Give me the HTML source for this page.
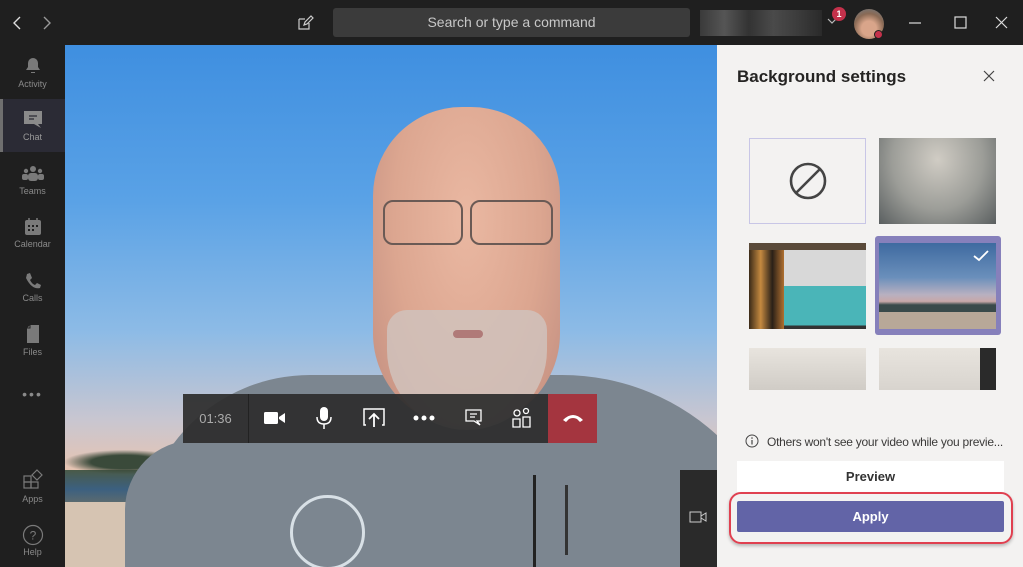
<!DOCTYPE html>
<html><head><meta charset="utf-8"><style>
*{margin:0;padding:0;box-sizing:border-box}
html,body{width:1023px;height:567px;overflow:hidden}
body{position:relative;background:#1f1f1f;font-family:"Liberation Sans",sans-serif}
.a{position:absolute}
.nav{color:#8a8a8a;font-size:9px;text-align:center;width:65px;left:0}
</style></head><body>
<div class="a" style="left:0;top:0;width:1023px;height:45px;background:#1f1f1f"></div>
<svg class="a" style="left:10px;top:14px" width="50" height="18"><path d="M10 3 L4 9 L10 15" stroke="#ddd" fill="none" stroke-width="1.4"/><path d="M34 3 L40 9 L34 15" stroke="#999" fill="none" stroke-width="1.4"/></svg>
<svg class="a" style="left:297px;top:15px" width="18" height="16"><path d="M2 4 H8 M2 4 V14 H12 V8 M7 10 L8 7 L14 1 L16 3 L10 9 Z" stroke="#ccc" fill="none" stroke-width="1.2"/></svg>
<div class="a" style="left:333px;top:8px;width:357px;height:29px;background:#3b3b3b;border-radius:3px;color:#c8c8c8;font-size:14px;text-align:center;line-height:29px">Search or type a command</div>
<div class="a" style="left:700px;top:10px;width:122px;height:26px;background:linear-gradient(90deg,#3a3a3a,#555 20%,#333 40%,#4a4a4a 60%,#3c3c3c 80%,#2a2a2a)"></div>
<svg class="a" style="left:826px;top:16px" width="12" height="10"><path d="M2 3 L6 7 L10 3" stroke="#bbb" fill="none" stroke-width="1.2"/></svg>
<div class="a" style="left:832px;top:7px;width:14px;height:14px;border-radius:7px;background:#c4314b;color:#fff;font-size:9px;font-weight:bold;text-align:center;line-height:14px">1</div>
<div class="a" style="left:854px;top:9px;width:30px;height:30px;border-radius:15px;background:radial-gradient(circle at 50% 65%,#d9a58a 30%,#8a6a55 60%,#6b7a85)"></div>
<div class="a" style="left:874px;top:30px;width:9px;height:9px;border-radius:5px;background:#c4314b;border:1px solid #1f1f1f"></div>
<svg class="a" style="left:905px;top:14px" width="110" height="18"><path d="M4 9 H16" stroke="#ddd" stroke-width="1.2"/><rect x="50" y="3" width="11" height="11" stroke="#ddd" fill="none" stroke-width="1.2"/><path d="M91 3 L102 14 M102 3 L91 14" stroke="#ddd" stroke-width="1.2"/></svg>
<div class="a" style="left:0;top:99px;width:65px;height:53px;background:#2b2b35"></div>
<div class="a" style="left:0;top:99px;width:3px;height:53px;background:#6f6f6f"></div>
<svg class="a" style="left:22px;top:55px" width="22" height="22"><path d="M4 15 H18 L16 12 V8 A5 5 0 0 0 6 8 V12 Z M9 17 H13 V18 H9Z" fill="#7a7a7a"/></svg>
<div class="a nav" style="top:79px">Activity</div>
<svg class="a" style="left:22px;top:110px" width="22" height="20"><path d="M2 1 H20 V14 H16 L19 18 L12 14 H2Z" fill="#8a8a8a"/><path d="M7 6 H15 M7 9 H12" stroke="#2b2b35" stroke-width="1.2"/></svg>
<div class="a nav" style="top:132px;color:#9a9a9a">Chat</div>
<svg class="a" style="left:21px;top:165px" width="24" height="18"><circle cx="12" cy="4" r="3" fill="#7a7a7a"/><circle cx="5" cy="6" r="2.2" fill="#7a7a7a"/><circle cx="19" cy="6" r="2.2" fill="#7a7a7a"/><rect x="7" y="8" width="10" height="8" rx="3" fill="#7a7a7a"/><rect x="1" y="9" width="6" height="6" rx="2" fill="#7a7a7a"/><rect x="17" y="9" width="6" height="6" rx="2" fill="#7a7a7a"/></svg>
<div class="a nav" style="top:186px">Teams</div>
<svg class="a" style="left:24px;top:218px" width="18" height="18"><rect x="1" y="2" width="16" height="15" rx="2" fill="#7a7a7a"/><path d="M5 0V4M13 0V4" stroke="#7a7a7a" stroke-width="1.5"/><g fill="#1f1f1f"><rect x="4" y="7" width="2" height="2"/><rect x="8" y="7" width="2" height="2"/><rect x="12" y="7" width="2" height="2"/><rect x="4" y="11" width="2" height="2"/><rect x="8" y="11" width="2" height="2"/></g></svg>
<div class="a nav" style="top:239px">Calendar</div>
<svg class="a" style="left:24px;top:272px" width="18" height="18"><path d="M3 2 L6 1 L8 6 L6 8 Q8 12 11 13 L13 11 L17 13 L16 16 Q8 18 2 6Z" fill="#7a7a7a"/></svg>
<div class="a nav" style="top:293px">Calls</div>
<svg class="a" style="left:25px;top:324px" width="16" height="20"><path d="M5 1 H14 V19 H2 V4Z" fill="#7a7a7a"/><path d="M2 4 H5 V1" fill="none" stroke="#1f1f1f"/></svg>
<div class="a nav" style="top:347px">Files</div>
<div class="a nav" style="top:386px;font-size:14px;letter-spacing:2px">•••</div>
<svg class="a" style="left:22px;top:468px" width="22" height="22"><rect x="2" y="8" width="7" height="6" stroke="#7a7a7a" fill="none" stroke-width="1.2"/><rect x="9" y="14" width="7" height="6" stroke="#7a7a7a" fill="none" stroke-width="1.2"/><rect x="2" y="14" width="7" height="6" stroke="#7a7a7a" fill="none" stroke-width="1.2"/><path d="M15 2 L20 7 L15 12 L10 7Z" stroke="#7a7a7a" fill="none" stroke-width="1.2"/></svg>
<div class="a nav" style="top:494px">Apps</div>
<svg class="a" style="left:22px;top:524px" width="22" height="22"><circle cx="11" cy="11" r="9.5" stroke="#7a7a7a" fill="none" stroke-width="1.2"/><text x="11" y="15.5" font-size="12" fill="#7a7a7a" text-anchor="middle" font-family="Liberation Sans">?</text></svg>
<div class="a nav" style="top:547px">Help</div>
<!-- video -->
<div class="a" style="left:65px;top:45px;width:652px;height:522px;overflow:hidden;background:linear-gradient(180deg,#3f8fe0 0%,#5aa2e6 30%,#8dbbe6 55%,#c9c6d0 72%,#e8c4b0 82%,#e6c9b0 100%)">
 <div class="a" style="left:0;top:455px;width:130px;height:70px;background:#d6c4b2"></div>
 <div class="a" style="left:0;top:425px;width:120px;height:32px;background:linear-gradient(180deg,#4a5a48,#3c6080 60%,#5a6a70)"></div>
 <div class="a" style="left:0;top:405px;width:120px;height:24px;background:radial-gradient(ellipse,#3a4a3a 40%,transparent 72%)"></div>
 <div class="a" style="left:75px;top:330px;width:652px;height:260px;border-radius:170px 230px 0 0;background:#7c8690"></div>
 <div class="a" style="left:60px;top:395px;width:140px;height:140px;background:#7c8690;border-radius:70px 0 0 0"></div>
 <div class="a" style="left:468px;top:430px;width:3px;height:100px;background:#222"></div>
 <div class="a" style="left:500px;top:440px;width:3px;height:70px;background:#333"></div>
 <div class="a" style="left:225px;top:450px;width:75px;height:75px;border-radius:38px;border:3px solid #d8e0e6"></div>
 <div class="a" style="left:308px;top:62px;width:187px;height:320px;border-radius:95px 95px 100px 100px;background:radial-gradient(ellipse at 50% 35%,#eab8a2 0%,#dca690 55%,#c99585 85%)"></div>
 <div class="a" style="left:322px;top:265px;width:160px;height:120px;border-radius:20px 20px 80px 80px;background:#d0c2bc;opacity:.85"></div>
 <div class="a" style="left:388px;top:285px;width:30px;height:8px;border-radius:4px;background:#b07a78"></div>
 <div class="a" style="left:318px;top:155px;width:80px;height:45px;border:2px solid #6a5a55;border-radius:10px"></div>
 <div class="a" style="left:405px;top:155px;width:83px;height:45px;border:2px solid #6a5a55;border-radius:10px"></div>
 <div class="a" style="left:615px;top:425px;width:40px;height:100px;background:#2a2a2a"></div>
 <svg class="a" style="left:623px;top:463px" width="20" height="20"><rect x="2" y="4" width="11" height="10" stroke="#ccc" fill="none"/><path d="M13 8 L18 5 V13 L13 10" stroke="#ccc" fill="none"/></svg>
</div>
<!-- toolbar -->
<div class="a" style="left:183px;top:394px;width:365px;height:49px;background:rgba(45,45,45,.93)"></div>
<div class="a" style="left:248px;top:394px;width:1px;height:49px;background:#222"></div>
<div class="a" style="left:183px;top:394px;width:65px;height:49px;color:#aaa;font-size:13px;text-align:center;line-height:49px">01:36</div>
<svg class="a" style="left:263px;top:409px" width="24" height="18"><rect x="1" y="3" width="14" height="12" rx="1.5" fill="#fff"/><path d="M16 8 L22 4 V14 L16 10Z" fill="#fff"/></svg>
<svg class="a" style="left:314px;top:406px" width="20" height="24"><rect x="6" y="1" width="8" height="14" rx="4" fill="#fff"/><path d="M3 11 Q3 18 10 18 Q17 18 17 11 M10 18 V23" stroke="#fff" fill="none" stroke-width="1.5"/></svg>
<svg class="a" style="left:362px;top:407px" width="24" height="22"><path d="M4 18 H2 V2 H22 V18 H20" stroke="#fff" fill="none" stroke-width="1.5"/><path d="M12 20 V7 M7 12 L12 7 L17 12" stroke="#fff" fill="none" stroke-width="1.8"/></svg>
<svg class="a" style="left:412px;top:414px" width="24" height="8"><circle cx="4" cy="4" r="2.5" fill="#fff"/><circle cx="12" cy="4" r="2.5" fill="#fff"/><circle cx="20" cy="4" r="2.5" fill="#fff"/></svg>
<svg class="a" style="left:465px;top:409px" width="18" height="18"><path d="M1 1 H16 V12 H12 L15 16 L9 12 H1Z" stroke="#fff" fill="none" stroke-width="1.3"/><path d="M5 5 H12 M5 8 H10" stroke="#fff" stroke-width="1.2"/></svg>
<svg class="a" style="left:511px;top:407px" width="22" height="22"><circle cx="6" cy="6" r="3" stroke="#fff" fill="none" stroke-width="1.3"/><circle cx="15" cy="4" r="2.5" stroke="#fff" fill="none" stroke-width="1.3"/><path d="M2 20 V12 H9 V20Z M12 20 V10 H19 V20Z" stroke="#fff" fill="none" stroke-width="1.3"/></svg>
<div class="a" style="left:548px;top:394px;width:49px;height:49px;background:#a4353f"></div>
<svg class="a" style="left:561px;top:412px" width="24" height="12"><path d="M2 8 Q12 -2 22 8 L19 10 L16 7 Q12 5 8 7 L5 10Z" fill="#fff"/></svg>
<!-- right panel -->
<div class="a" style="left:717px;top:45px;width:306px;height:522px;background:#f3f2f1"></div>
<div class="a" style="left:737px;top:67px;font-size:17px;font-weight:bold;color:#252423">Background settings</div>
<svg class="a" style="left:983px;top:70px" width="12" height="12"><path d="M1 1 L11 11 M11 1 L1 11" stroke="#444" stroke-width="1.2"/></svg>
<div class="a" style="left:749px;top:138px;width:117px;height:86px;background:#f3f2f1;border:1px solid #c8c6e6"></div>
<svg class="a" style="left:789px;top:162px" width="38" height="38"><circle cx="19" cy="19" r="17" stroke="#444" fill="none" stroke-width="2.6"/><path d="M7 31 L31 7" stroke="#444" stroke-width="2.6"/></svg>
<div class="a" style="left:879px;top:138px;width:117px;height:86px;background:radial-gradient(ellipse at 50% 25%,#d0ccc4,#9c9d98 55%,#5a5f60)"></div>
<div class="a" style="left:749px;top:243px;width:117px;height:86px;background:linear-gradient(180deg,#5a4a3a 0 8%,#d8d8d8 8% 50%,#4ab5b8 50% 96%,#333 96%)"></div>
<div class="a" style="left:749px;top:250px;width:35px;height:79px;background:linear-gradient(90deg,#3a2a18,#c58a40,#2a2018,#b07030)"></div>
<div class="a" style="left:875px;top:236px;width:126px;height:99px;background:#8680bb;border-radius:3px"></div>
<div class="a" style="left:879px;top:243px;width:117px;height:86px;background:linear-gradient(180deg,#3e6aa0 0%,#6a8fbb 40%,#b8b0c0 60%,#c8a8a8 68%,#3a4a4a 72% 80%,#b8a898 80%)"></div>
<svg class="a" style="left:973px;top:250px" width="16" height="12"><path d="M1 6 L6 10 L15 1" stroke="#fff" fill="none" stroke-width="1.8"/></svg>
<div class="a" style="left:749px;top:348px;width:117px;height:42px;background:linear-gradient(180deg,#e8e4de,#d0ccc6)"></div>
<div class="a" style="left:879px;top:348px;width:117px;height:42px;background:linear-gradient(180deg,#e8e4de,#d8d4ce)"></div>
<div class="a" style="left:980px;top:348px;width:16px;height:42px;background:#2a2a2a"></div>
<svg class="a" style="left:745px;top:434px" width="14" height="14"><circle cx="7" cy="7" r="6" stroke="#444" fill="none"/><path d="M7 6 V10.5" stroke="#444" stroke-width="1.2"/><circle cx="7" cy="4" r=".8" fill="#444"/></svg>
<div class="a" style="left:767px;top:435px;font-size:12px;color:#3b3a39;letter-spacing:-0.25px;white-space:nowrap">Others won't see your video while you previe...</div>
<div class="a" style="left:737px;top:461px;width:267px;height:31px;background:#fff;font-size:13px;font-weight:bold;color:#333;text-align:center;line-height:31px">Preview</div>
<div class="a" style="left:737px;top:501px;width:267px;height:31px;background:#6264a7;font-size:13px;font-weight:bold;color:#fff;text-align:center;line-height:31px;border-radius:2px">Apply</div>
<div class="a" style="left:729px;top:492px;width:284px;height:52px;border:2px solid #e04050;border-radius:12px;box-shadow:0 2px 3px rgba(0,0,0,.25)"></div>
</body></html>
